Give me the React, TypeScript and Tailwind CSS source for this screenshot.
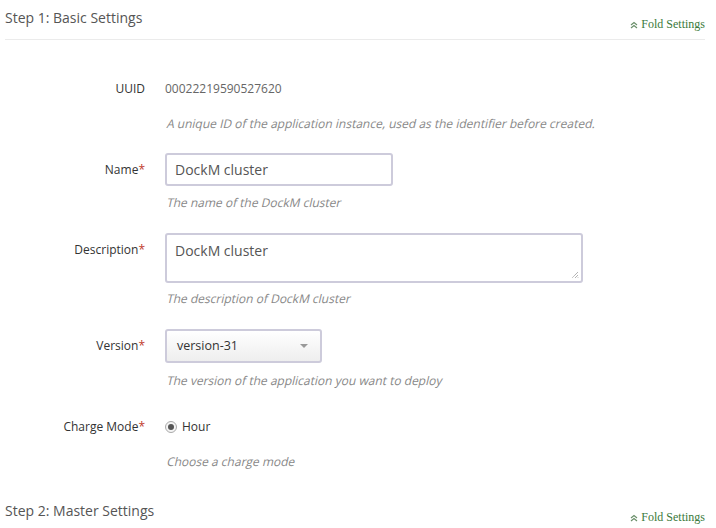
import React from "react";

const sans = { fontFamily: '"Open Sans", "Noto Sans", sans-serif' };

function Fold({ pt }: { pt: string }) {
  return (
    <div className={`flex items-center gap-[3px] ${pt} text-[12px] leading-[16px] text-[#3b7a3b]`} style={{ fontFamily: '"Liberation Serif", serif' }}>
      <svg width="8" height="8" viewBox="0 0 8 8" className="mt-[1px]">
        <path d="M1 4 L4 1.5 L7 4 M1 7 L4 4.5 L7 7" fill="none" stroke="#6a8f6a" strokeWidth="1.2" />
      </svg>
      <span>Fold Settings</span>
    </div>
  );
}

function Label({ text, req = true }: { text: string; req?: boolean }) {
  return (
    <div className="w-[140px] shrink-0 text-right text-[12px] text-[#333]">
      {text}
      {req && <span className="text-[#c0392b]">*</span>}
    </div>
  );
}

function Help({ children }: { children: React.ReactNode }) {
  return (
    <div className="text-[12px] leading-[18px] text-[#888]">
      <span className="inline-block skew-x-[-13deg] origin-bottom-left">{children}</span>
    </div>
  );
}

export default function App() {
  return (
    <div className="bg-white pl-[5px] pr-[11px] w-[716px] h-[528px] overflow-hidden" style={sans}>
      <div className="flex justify-between items-start h-[40px] border-b border-[#ebebeb]">
        <div className="pt-[8px] text-[14px] leading-[20px] text-[#555]">Step 1: Basic Settings</div>
        <Fold pt="pt-[16px]" />
      </div>

      {/* UUID */}
      <div className="flex gap-[20px] mt-[39px]">
        <div className="w-[140px] shrink-0 text-right text-[12px] leading-[20px] text-[#333]">UUID</div>
        <div>
          <div className="text-[12px] leading-[20px] text-[#666]">00022219590527620</div>
          <div className="mt-[16px]">
            <Help>A unique ID of the application instance, used as the identifier before created.</Help>
          </div>
        </div>
      </div>

      {/* Name */}
      <div className="flex gap-[20px] mt-[20px]">
        <div className="leading-[33px]"><Label text="Name" /></div>
        <div>
          <div className="w-[228px] h-[33px] border-2 border-[#cdcbdb] rounded-[3px] px-[8px] text-[14px] leading-[29px] text-[#555]">
            DockM cluster
          </div>
          <div className="mt-[8px]">
            <Help>The name of the DockM cluster</Help>
          </div>
        </div>
      </div>

      {/* Description */}
      <div className="flex gap-[20px] mt-[21px]">
        <div className="leading-[34px]"><Label text="Description" /></div>
        <div>
          <div className="relative w-[418px] h-[50px] border-2 border-[#cdcbdb] rounded-[3px] px-[8px] pt-[3px] text-[14px] leading-[26px] text-[#555]">
            DockM cluster
            <svg width="8" height="8" viewBox="0 0 8 8" className="absolute right-[2px] bottom-[2px]">
              <path d="M7 1 L1 7 M7 4 L4 7 M7 6.5 L6.5 7" stroke="#777" strokeWidth="0.8" strokeDasharray="1 0.6" />
            </svg>
          </div>
          <div className="mt-[7px]">
            <Help>The description of DockM cluster</Help>
          </div>
        </div>
      </div>

      {/* Version */}
      <div className="flex gap-[20px] mt-[21px]">
        <div className="leading-[34px]"><Label text="Version" /></div>
        <div>
          <div className="flex items-center justify-between w-[157px] h-[34px] border-2 border-[#cdcbdb] rounded-[3px] pl-[10px] pr-[12px] text-[12.5px] text-[#333] bg-gradient-to-b from-[#ffffff] to-[#eeeeee]">
            <span>version-31</span>
            <svg width="8" height="5" viewBox="0 0 8 5">
              <path d="M0 0 L8 0 L4 4 Z" fill="#999" />
            </svg>
          </div>
          <div className="mt-[9px]">
            <Help>The version of the application you want to deploy</Help>
          </div>
        </div>
      </div>

      {/* Charge Mode */}
      <div className="flex gap-[20px] mt-[27px]">
        <div className="leading-[20px]"><Label text="Charge Mode" /></div>
        <div>
          <div className="flex items-center gap-[5px] h-[20px]">
            <div className="w-[12px] h-[12px] rounded-full border border-[#aaa] bg-[#f4f4f4] flex items-center justify-center">
              <div className="w-[6px] h-[6px] rounded-full bg-[#555]" />
            </div>
            <span className="text-[12px] text-[#333]">Hour</span>
          </div>
          <div className="mt-[16px]">
            <Help>Choose a charge mode</Help>
          </div>
        </div>
      </div>

      <div className="flex justify-between items-start mt-[30px]">
        <div className="text-[14px] leading-[20px] text-[#555]">Step 2: Master Settings</div>
        <Fold pt="pt-[8px]" />
      </div>
    </div>
  );
}
